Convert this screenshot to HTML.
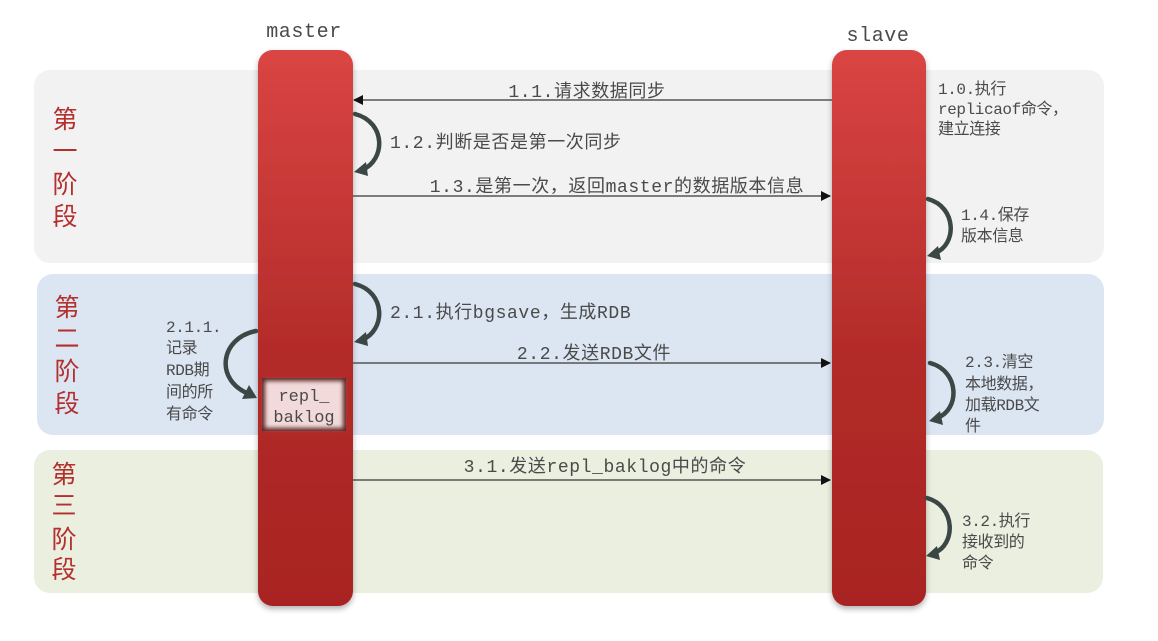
<!DOCTYPE html>
<html><head><meta charset="utf-8"><style>
html,body{margin:0;padding:0;background:#fff;}
svg{display:block;}
text{font-family:"Liberation Mono","Noto Sans CJK SC",monospace;fill:#4a4a4a;}
.st{font-family:"Liberation Sans","Noto Sans CJK SC",sans-serif;fill:#b3302e;font-size:25px;}
.m{font-size:18px;letter-spacing:0.6px;}
.s{font-size:16px;letter-spacing:-0.4px;}
</style></head><body>
<svg width="1158" height="641" viewBox="0 0 1158 641" xmlns="http://www.w3.org/2000/svg">
<defs>
<linearGradient id="g" x1="0" y1="0" x2="0" y2="1">
<stop offset="0" stop-color="#d94543"/><stop offset="0.55" stop-color="#b32b29"/><stop offset="1" stop-color="#a82422"/>
</linearGradient>
<filter id="sh" x="-20%" y="-5%" width="140%" height="110%"><feDropShadow dx="0" dy="3" stdDeviation="3" flood-color="#000" flood-opacity="0.3"/></filter>
<filter id="ins" x="-10%" y="-10%" width="120%" height="120%"><feGaussianBlur stdDeviation="2"/></filter>
<marker id="ah" markerWidth="10" markerHeight="10" refX="9" refY="5" orient="auto" markerUnits="userSpaceOnUse"><path d="M0,0 L10,5 L0,10 z" fill="#111"/></marker>
</defs>
<rect x="34" y="70" width="1070" height="193" rx="16" fill="#f2f2f2"/>
<rect x="37" y="274" width="1067" height="161" rx="16" fill="#dce6f2"/>
<rect x="34" y="450" width="1069" height="143" rx="16" fill="#ebefe0"/>

<text x="304" y="37" class="m" text-anchor="middle" style="font-size:20px">master</text>
<text x="878" y="41" class="m" text-anchor="middle" style="font-size:20px">slave</text>

<text class="st" x="65" y="128" text-anchor="middle">第</text>
<text class="st" x="65" y="160" text-anchor="middle">一</text>
<text class="st" x="65" y="193" text-anchor="middle">阶</text>
<text class="st" x="65" y="225" text-anchor="middle">段</text>
<text class="st" x="67" y="316" text-anchor="middle">第</text>
<text class="st" x="67" y="347" text-anchor="middle">二</text>
<text class="st" x="67" y="380" text-anchor="middle">阶</text>
<text class="st" x="67" y="412" text-anchor="middle">段</text>
<text class="st" x="64" y="483" text-anchor="middle">第</text>
<text class="st" x="64" y="514" text-anchor="middle">三</text>
<text class="st" x="64" y="548" text-anchor="middle">阶</text>
<text class="st" x="64" y="578" text-anchor="middle">段</text>

<rect x="258" y="50" width="95" height="556" rx="15" fill="url(#g)" filter="url(#sh)"/>
<rect x="832" y="50" width="94" height="556" rx="15" fill="url(#g)" filter="url(#sh)"/>

<rect x="262" y="378" width="84" height="53" fill="#5a2a28"/>
<rect x="265" y="381" width="78" height="47" fill="#f3dada" filter="url(#ins)"/>
<text x="304" y="401" text-anchor="middle" style="font-size:17px">repl_</text>
<text x="304" y="422" text-anchor="middle" style="font-size:17px">baklog</text>

<g stroke="#555" stroke-width="1.5" fill="none">
<line x1="832" y1="100" x2="354" y2="100" marker-end="url(#ah)"/>
<line x1="353" y1="196" x2="830" y2="196" marker-end="url(#ah)"/>
<line x1="353" y1="363" x2="830" y2="363" marker-end="url(#ah)"/>
<line x1="353" y1="480" x2="830" y2="480" marker-end="url(#ah)"/>
</g>
<text x="587" y="97" class="m" text-anchor="middle">1.1.请求数据同步</text>
<text x="617" y="192" class="m" text-anchor="middle">1.3.是第一次，返回master的数据版本信息</text>
<text x="594" y="359" class="m" text-anchor="middle">2.2.发送RDB文件</text>
<text x="605" y="472" class="m" text-anchor="middle">3.1.发送repl_baklog中的命令</text>

<g fill="none" stroke="#3b4745" stroke-width="4.5" stroke-linecap="round">
<path d="M355,114 C386,122 386,160 362,170"/>
<path d="M355,284 C386,292 386,330 362,340"/>
<path d="M928,199 C957,207 957,245 935,253"/>
<path d="M930,363 C960,371 960,410 937,418"/>
<path d="M927,498 C956,506 956,545 934,553"/>
<path d="M256,331 C220,338 214,380 249,394"/>
</g>
<g fill="#3b4745">
<path d="M354,172 L366,162 L368,176 z"/>
<path d="M354,342 L366,332 L368,346 z"/>
<path d="M927,256 L938,246 L941,260 z"/>
<path d="M929,421 L940,411 L943,425 z"/>
<path d="M926,556 L937,546 L940,560 z"/>
<path d="M257,398 L242,399 L249,385 z"/>
</g>

<text x="390" y="148" class="m">1.2.判断是否是第一次同步</text>
<text x="390" y="318" class="m">2.1.执行bgsave，生成RDB</text>

<text x="938" y="94" class="s">1.0.执行</text>
<text x="938" y="114" class="s">replicaof命令，</text>
<text x="938" y="134" class="s">建立连接</text>
<text x="961" y="220" class="s">1.4.保存</text>
<text x="961" y="241" class="s">版本信息</text>
<text x="965" y="367" class="s">2.3.清空</text>
<text x="965" y="389" class="s">本地数据，</text>
<text x="965" y="410" class="s">加载RDB文</text>
<text x="965" y="431" class="s">件</text>
<text x="962" y="526" class="s">3.2.执行</text>
<text x="962" y="547" class="s">接收到的</text>
<text x="962" y="568" class="s">命令</text>
<text x="166" y="332" class="s">2.1.1.</text>
<text x="166" y="353" class="s">记录</text>
<text x="166" y="375" class="s">RDB期</text>
<text x="166" y="397" class="s">间的所</text>
<text x="166" y="419" class="s">有命令</text>
</svg>
</body></html>
